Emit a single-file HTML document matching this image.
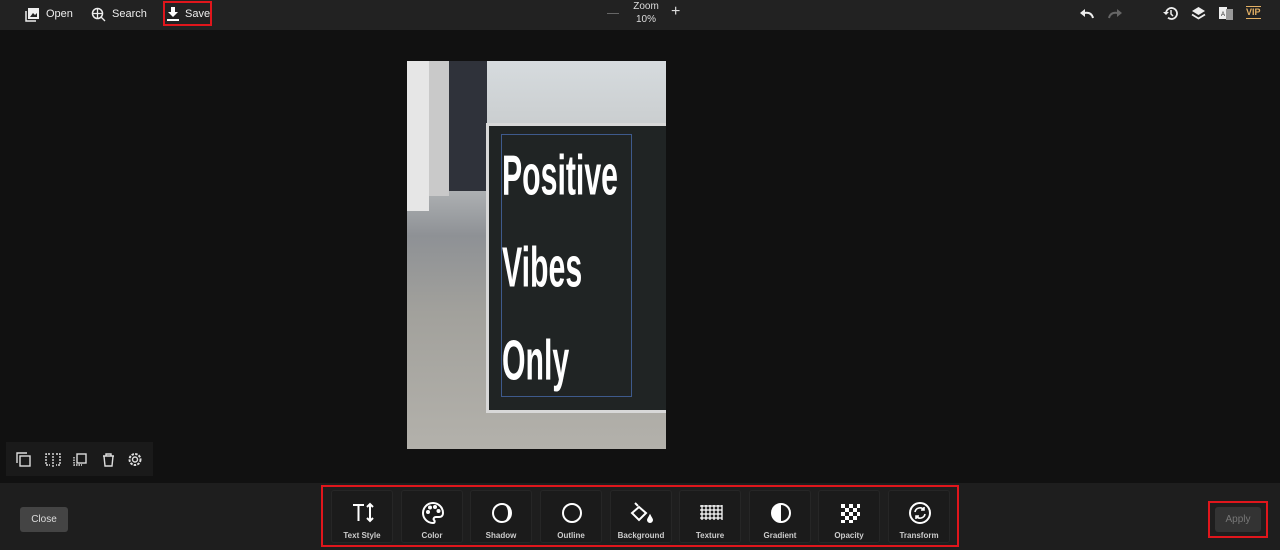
<!DOCTYPE html>
<html><head><style>
*{margin:0;padding:0;box-sizing:border-box}
body{width:1280px;height:550px;background:#111;font-family:"Liberation Sans",sans-serif;color:#fff;position:relative;overflow:hidden}
.top{position:absolute;left:0;top:0;width:1280px;height:30px;background:#222}
.tb{position:absolute;top:0;height:28px;display:flex;align-items:center;font-size:11px;color:#eee;gap:6px}
.bot{position:absolute;left:0;top:483px;width:1280px;height:67px;background:#1e1e1e}
.tool{position:absolute;top:490px;width:62px;height:53px;background:#1b1b1b;border:1px solid #262626;border-radius:3px;text-align:center;font-size:8px;font-weight:bold;color:#ccc}
.tool svg{position:absolute;left:19px;top:10px}
.tool span{position:absolute;left:0;right:0;top:40px}
.red{position:absolute;border:2px solid #e0161c}
.w{position:absolute;left:95px;font-size:42px;line-height:42px;font-weight:bold;color:#fff;transform:scale(0.72,1.35);transform-origin:left top;white-space:nowrap}
</style></head><body>
<div class="top"></div>
<div class="tb" style="left:25px"><svg width="15" height="15" viewBox="0 0 15 15"><rect x="3" y="1" width="11" height="11" fill="#eee"/><path d="M1 4v10h10" stroke="#eee" fill="none" stroke-width="1.5"/><path d="M5 10l3-4 2 2 2-2v4z" fill="#222"/></svg>Open</div>
<div class="tb" style="left:91px"><svg width="15" height="15" viewBox="0 0 15 15"><circle cx="6.5" cy="6.5" r="5" stroke="#eee" fill="none" stroke-width="1.5"/><path d="M1.5 6.5h10M6.5 1.5v10M10 10l4 4" stroke="#eee" stroke-width="1.3"/></svg>Search</div>
<div class="tb" style="left:167px"><svg width="12" height="14" viewBox="0 0 12 14"><path d="M4 0h4v5h3l-5 5-5-5h3z" fill="#fff"/><rect x="0" y="12" width="12" height="2" fill="#fff"/></svg>Save</div>
<div class="red" style="left:163px;top:1px;width:49px;height:25px"></div>
<div style="position:absolute;left:607px;top:13px;width:12px;height:1px;background:#666"></div>
<div style="position:absolute;left:628px;top:0;width:36px;text-align:center;font-size:10px;line-height:13px;color:#ddd">Zoom<br>10%</div>
<div style="position:absolute;left:671px;top:3px;font-size:16px;color:#ddd">+</div>
<svg style="position:absolute;left:1079px;top:7px" width="16" height="12" viewBox="0 0 16 12"><path d="M14 11c-1-4-4-6-9-5" stroke="#eee" stroke-width="2" fill="none"/><path d="M1 6l5-4v8z" fill="#eee"/></svg>
<svg style="position:absolute;left:1107px;top:7px" width="16" height="12" viewBox="0 0 16 12"><path d="M2 11c1-4 4-6 9-5" stroke="#666" stroke-width="2" fill="none"/><path d="M15 6l-5-4v8z" fill="#666"/></svg>
<svg style="position:absolute;left:1163px;top:6px" width="15" height="15" viewBox="0 0 15 15"><path d="M3 7.5a5.5 5.5 0 1 1 2 4.2" stroke="#eee" stroke-width="1.8" fill="none"/><path d="M0 6h6l-3 3z" fill="#eee"/><path d="M8 4v4l2 2" stroke="#eee" stroke-width="1.5" fill="none"/></svg>
<svg style="position:absolute;left:1191px;top:6px" width="15" height="15" viewBox="0 0 15 15"><path d="M7.5 1l6.5 4-6.5 4-6.5-4z" fill="#eee"/><path d="M1 8.5l6.5 4 6.5-4" stroke="#eee" stroke-width="1.8" fill="none"/></svg>
<svg style="position:absolute;left:1219px;top:6px" width="15" height="15" viewBox="0 0 15 15"><rect x="0" y="1" width="8" height="12" fill="#eee"/><rect x="7" y="3" width="7" height="11" fill="#999"/><text x="2" y="10" font-size="6" fill="#222">A</text></svg>
<div style="position:absolute;left:1246px;top:6px;font-size:9px;font-weight:bold;color:#e3b064;border-top:1px solid #e3b064;border-bottom:1px solid #e3b064;line-height:11px">VIP</div>

<div style="position:absolute;left:407px;top:61px;width:259px;height:388px;background:linear-gradient(180deg,#d6dbde 0%,#c4c7c8 25%,#8e9195 45%,#a2a19c 65%,#b3b1ab 100%);overflow:hidden">
 <div style="position:absolute;left:0;top:0;width:22px;height:150px;background:#e6e6e6"></div>
 <div style="position:absolute;left:22px;top:0;width:20px;height:135px;background:#c9c9c9"></div>
 <div style="position:absolute;left:42px;top:0;width:38px;height:130px;background:#2f323a"></div>
 <div style="position:absolute;left:79px;top:62px;width:180px;height:290px;background:#202424;border:3px solid #d8d8d8;border-right:none"></div>
 <div style="position:absolute;left:94px;top:73px;width:131px;height:263px;border:1px solid #3e5a8c"></div>
 <div class="w" style="top:86px">Positive</div>
 <div class="w" style="top:178px">Vibes</div>
 <div class="w" style="top:271px">Only</div>
</div>

<div style="position:absolute;left:6px;top:442px;width:147px;height:34px;background:#1a1a1a"></div>
<svg style="position:absolute;left:16px;top:452px" width="130" height="15" viewBox="0 0 130 15" fill="none" stroke="#ddd" stroke-width="1.4">
<rect x="4" y="4" width="10" height="10"/><path d="M1 11V1h10"/>
<path d="M34 2h-4v11h4M37 1v14M40 2h4v11h-4" stroke-dasharray="2 1"/>
<rect x="61" y="2" width="9" height="9"/><path d="M58 5v8h8" stroke-dasharray="1.5 1"/>
<path d="M87 4h11M90 4V2h5v2M88 4l1 10h7l1-10"/>
<circle cx="119" cy="7.5" r="2.5"/><circle cx="119" cy="7.5" r="5.5" stroke-dasharray="2.5 1.2" stroke-width="2"/>
</svg>

<div class="bot"></div>
<div style="position:absolute;left:20px;top:507px;width:48px;height:25px;background:#444;border-radius:3px;font-size:10px;color:#ddd;text-align:center;line-height:25px">Close</div>

<div class="tool" style="left:331px"><svg width="24" height="24" viewBox="0 0 24 24" fill="none" stroke="#fff" stroke-width="2"><path d="M2 4h11M7.5 4v16M19 3v17M16 6l3-3 3 3M16 17l3 3 3-3"/></svg><span>Text Style</span></div>
<div class="tool" style="left:401px"><svg width="24" height="24" viewBox="0 0 24 24" fill="none" stroke="#fff" stroke-width="2"><path d="M12 2a10 10 0 1 0 0 20c2 0 2-2 1-3s0-3 2-3h3c3 0 4-2 4-4 0-6-5-10-10-10z"/><circle cx="7" cy="11" r="1" fill="#fff"/><circle cx="9" cy="6.5" r="1" fill="#fff"/><circle cx="14" cy="6" r="1" fill="#fff"/><circle cx="17.5" cy="10" r="1" fill="#fff"/></svg><span>Color</span></div>
<div class="tool" style="left:470px"><svg width="24" height="24" viewBox="0 0 24 24"><circle cx="12" cy="12" r="9" fill="none" stroke="#fff" stroke-width="2"/><path d="M12 3a9 9 0 0 1 0 18a6 9 0 0 0 0-18z" fill="#fff"/></svg><span>Shadow</span></div>
<div class="tool" style="left:540px"><svg width="24" height="24" viewBox="0 0 24 24"><circle cx="12" cy="12" r="9" fill="none" stroke="#fff" stroke-width="2"/></svg><span>Outline</span></div>
<div class="tool" style="left:610px"><svg width="24" height="24" viewBox="0 0 24 24" fill="none" stroke="#fff" stroke-width="2"><path d="M5 2l3 3M9 6L2 12l7 7 7-7z"/><path d="M20 15c-1 2-2 3-2 4a2 2 0 0 0 4 0c0-1-1-2-2-4z" fill="#fff"/></svg><span>Background</span></div>
<div class="tool" style="left:679px"><svg width="24" height="24" viewBox="0 0 24 24" stroke="#fff" stroke-width="1.3"><path d="M1 5h22M1 9h22M1 13h22M1 17h22M3 4v15M7 4v15M11 4v15M15 4v15M19 4v15M23 4v15"/></svg><span>Texture</span></div>
<div class="tool" style="left:749px"><svg width="24" height="24" viewBox="0 0 24 24"><circle cx="12" cy="12" r="9" fill="none" stroke="#fff" stroke-width="2"/><path d="M12 3a9 9 0 0 0 0 18z" fill="#fff"/></svg><span>Gradient</span></div>
<div class="tool" style="left:818px"><svg width="24" height="24" viewBox="0 0 24 24" fill="#fff"><rect x="3" y="3" width="4" height="4"/><rect x="11" y="3" width="4" height="4"/><rect x="19" y="3" width="3" height="4"/><rect x="7" y="7" width="4" height="4"/><rect x="15" y="7" width="4" height="4"/><rect x="3" y="11" width="4" height="4"/><rect x="11" y="11" width="4" height="4"/><rect x="19" y="11" width="3" height="4"/><rect x="7" y="15" width="4" height="4"/><rect x="15" y="15" width="4" height="4"/><rect x="3" y="19" width="4" height="3"/><rect x="11" y="19" width="4" height="3"/></svg><span>Opacity</span></div>
<div class="tool" style="left:888px"><svg width="24" height="24" viewBox="0 0 24 24" fill="none" stroke="#fff" stroke-width="2"><circle cx="12" cy="12" r="10"/><path d="M7 11a5 5 0 0 1 9-2M17 13a5 5 0 0 1-9 2M16 6v3h-3M8 18v-3h3" stroke-width="1.6"/></svg><span>Transform</span></div>
<div class="red" style="left:321px;top:485px;width:638px;height:62px"></div>

<div style="position:absolute;left:1215px;top:507px;width:46px;height:25px;background:#333;border-radius:3px;font-size:10px;color:#777;text-align:center;line-height:25px">Apply</div>
<div class="red" style="left:1208px;top:501px;width:60px;height:37px"></div>
</body></html>
